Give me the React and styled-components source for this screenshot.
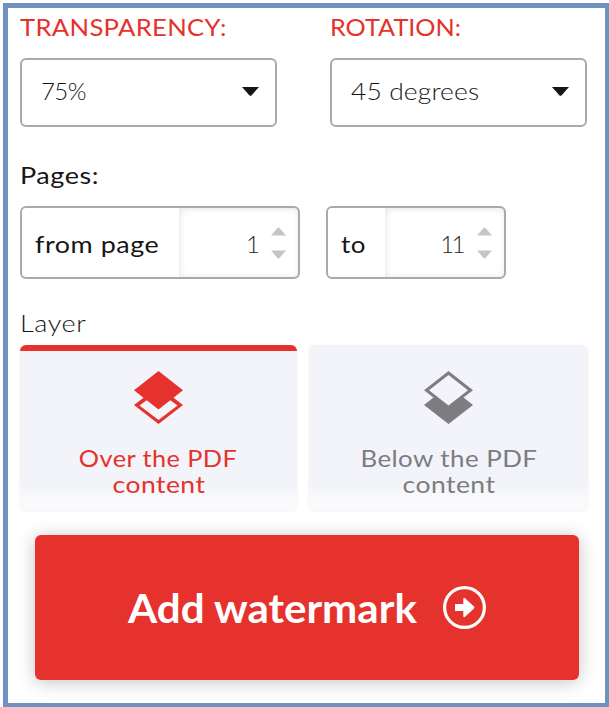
import React from "react";
import styled, { createGlobalStyle } from "styled-components";

const GlobalStyle = createGlobalStyle`
  *, *::before, *::after { box-sizing: border-box; }
  body { margin: 0; background: #fff; overflow: hidden; }
  button { font: inherit; border: 0; }
`;

const Frame = styled.main`
  width: 606px;
  height: 704px;
  margin: 3px 0 0 3px;
  padding: 4px 12px 0;
  border: solid #7092be;
  border-width: 5px 4px 4px 5px;
  background: #fff;
  color: #161616;
  font: 400 24px/30px Lato, "Liberation Sans", sans-serif;
  white-space: nowrap;
  overflow: hidden;
`;

const FieldRow = styled.div`
  display: grid;
  grid-template-columns: 257px 257px;
  column-gap: 53px;
`;

const FieldLabel = styled.div`
  height: 30px;
  margin-bottom: 16px;
  color: #e5322d;
`;

/* Wide-set lettering: $s is the tracking, $x the horizontal stretch. */
const Wide = styled.span`
  display: inline-block;
  letter-spacing: ${(p) => p.$s || 0}px;
  transform: scaleX(${(p) => p.$x || 1});
  transform-origin: ${(p) => p.$o || "left"} center;
`;

const Digits = styled.span`
  letter-spacing: ${(p) => p.$s || 0}px;
  margin-right: ${(p) => p.$r || 0}px;
`;

const Select = styled.div`
  display: flex;
  align-items: center;
  justify-content: space-between;
  height: 69px;
  padding: 0 16px 3px 19px;
  border: 2px solid #a9a9af;
  border-radius: 6px;
  color: #161616;
  font-weight: 300;
`;

const Caret = styled.svg`
  display: block;
  width: 17px;
  height: 9px;
`;

const Heading = styled.div`
  height: 30px;
  margin: ${(p) => p.$m};
  font-weight: ${(p) => p.$w || 400};
`;

const PageRow = styled.div`
  display: flex;
  gap: 26px;
`;

const PageGroup = styled.div`
  display: flex;
  width: ${(p) => p.$w}px;
  height: 73px;
  border: 2px solid #a9a9af;
  border-radius: 6px;
  overflow: hidden;
`;

const PageLabel = styled.div`
  width: ${(p) => p.$w}px;
  padding: 21px 0 0 13px;
`;

const PageInput = styled.div`
  flex: 1;
  display: flex;
  justify-content: flex-end;
  gap: 11px;
  padding: 21px 12px 0 0;
  box-shadow: inset 1px 1px 7px rgba(0, 0, 0, 0.1);
  color: #262626;
  font-weight: 300;
`;

const Stepper = styled.svg`
  display: block;
  width: 15px;
  height: 32px;
  margin-top: -2px;
  fill: #c5c5c5;
`;

const Cards = styled.div`
  display: grid;
  grid-template-columns: 277px 279px;
  column-gap: 12px;
`;

const Card = styled.div`
  display: flex;
  flex-direction: column;
  align-items: center;
  height: 165px;
  padding-top: ${(p) => (p.$active ? 20 : 26)}px;
  border-top: ${(p) => (p.$active ? "6px solid #e5322d" : "0")};
  border-radius: 6px;
  background: linear-gradient(#f3f4f9 0 140px, #f9fafc 153px, #fafafc) border-box;
  background-origin: border-box;
  box-shadow: 0 1px 3px rgba(0, 0, 0, 0.07);
  color: ${(p) => (p.$active ? "#e5322d" : "#7d7c81")};
  line-height: 26px;
  text-align: center;
`;

const LayerIcon = styled.svg`
  display: block;
  width: 49px;
  height: 53px;
  margin-bottom: 21px;
`;

const SubmitButton = styled.button`
  display: flex;
  align-items: center;
  justify-content: center;
  gap: 40px;
  width: 544px;
  height: 145px;
  margin: 25px 0 0 15px;
  padding: 0;
  border-radius: 6px;
  background: #e5322d;
  box-shadow: 0 2px 18px rgba(0, 0, 0, 0.24);
  color: #fff;
  font-size: 40px;
  font-weight: 700;
  line-height: 48px;
`;

const ArrowCircle = styled.svg`
  display: block;
  width: 43px;
  height: 43px;
`;

function SelectField({ label, ls, lx, value, vs, vx }) {
  return (
    <div>
      <FieldLabel><Wide $s={ls} $x={lx}>{label}</Wide></FieldLabel>
      <Select>
        <Wide $s={vs} $x={vx}>{value}</Wide>
        <Caret viewBox="0 0 17 9"><path d="M0 0H17L9.7 8.2Q8.5 9.4 7.3 8.2Z" fill="#161616" /></Caret>
      </Select>
    </div>
  );
}

function Steps() {
  return (
    <Stepper viewBox="0 0 15 32">
      <path d="M0 8.5 6.5 .9Q7.5 0 8.5 .9L15 8.5Z" />
      <path d="M0 23.5H15L8.5 31Q7.5 32 6.5 31Z" />
    </Stepper>
  );
}

export default function App() {
  return (
    <>
      <GlobalStyle />
      <Frame>
        <FieldRow>
          <SelectField label="TRANSPARENCY:" ls={0.3} lx={1.068} value="75%" vs={-0.6} />
          <SelectField label="ROTATION:" ls={0} lx={1.05} value="45 degrees" vs={0.1} vx={1.102} />
        </FieldRow>

        <Heading $m="33px 0 16px"><Wide $s={0.5} $x={1.125}>Pages:</Wide></Heading>
        <PageRow>
          <PageGroup $w={280}>
            <PageLabel $w={157}><Wide $s={0.5} $x={1.12}>from page</Wide></PageLabel>
            <PageInput><Digits>1</Digits><Steps /></PageInput>
          </PageGroup>
          <PageGroup $w={180}>
            <PageLabel $w={57}><Wide $s={0.5} $x={1.08}>to</Wide></PageLabel>
            <PageInput><Digits $s={-2.5} $r={3}>11</Digits><Steps /></PageInput>
          </PageGroup>
        </PageRow>

        <Heading $m="29px 0 7px" $w={300}><Wide $s={0.5} $x={1.13}>Layer</Wide></Heading>
        <Cards>
          <Card $active>
            <LayerIcon viewBox="0 0 49 53">
              <path d="M24.5 0 49 19.3 24.5 38.5 0 19.3Z" fill="currentColor" />
              <path d="M10.5 26 0 34 24.5 53 49 34 38.5 26 35.3 28.5 43.5 34.5 24.5 49 5.5 34.5 13.7 28.5Z" fill="currentColor" />
            </LayerIcon>
            <Wide $o="center" $s={0.4} $x={1.055}>Over the PDF</Wide>
            <Wide $o="center" $s={0.4} $x={1.105}>content</Wide>
          </Card>
          <Card>
            <LayerIcon viewBox="0 0 49 53">
              <path fillRule="evenodd" d="M24.5 0 49 19.3 39.5 26.5 49 34 24.5 53 0 34 9.5 26.5 0 19.3ZM24.5 4 5 19.3 24.5 34.5 44 19.3Z" fill="currentColor" />
            </LayerIcon>
            <Wide $o="center" $s={0.4} $x={1.08}>Below the PDF</Wide>
            <Wide $o="center" $s={0.4} $x={1.105}>content</Wide>
          </Card>
        </Cards>

        <SubmitButton>
          <Wide $x={1.052}>Add watermark</Wide>
          <ArrowCircle viewBox="0 0 43 43">
            <circle cx="21.5" cy="21.5" r="19.9" fill="none" stroke="#fff" strokeWidth="3.2" />
            <path d="M12.5 18H20.3V12.5Q21 11.3 22 12.3L31 20.5Q31.8 21.5 31 22.5L22 30.7Q21 31.7 20.3 30.5V25H12.5Q12 25 12 24.5V18.5Q12 18 12.5 18Z" fill="#fff" />
          </ArrowCircle>
        </SubmitButton>
      </Frame>
    </>
  );
}
